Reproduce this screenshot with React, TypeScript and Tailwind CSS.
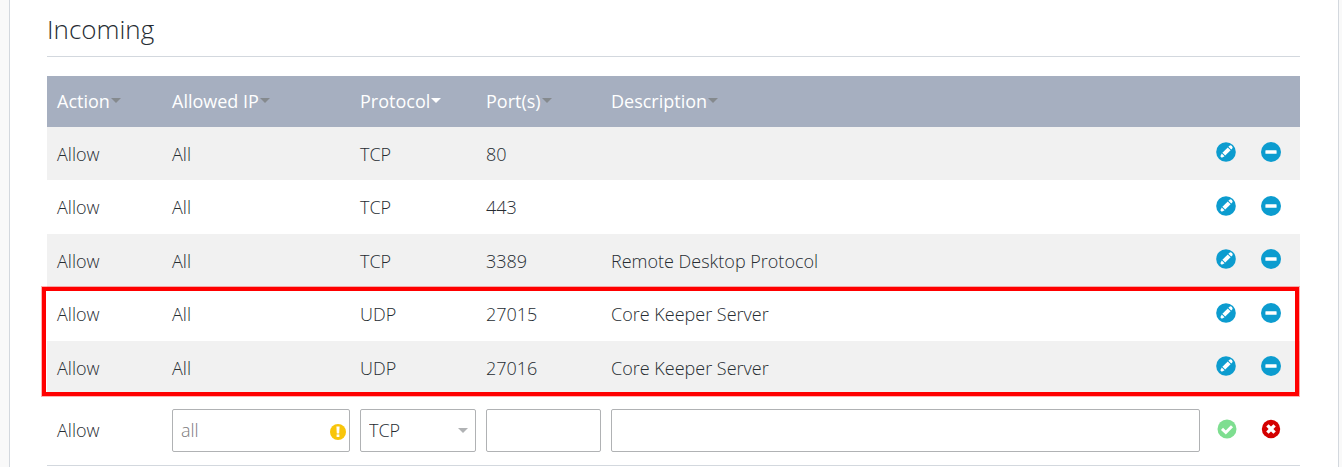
import React, { useState } from 'react';

interface Rule {
  id: number;
  action: string;
  ip: string;
  protocol: string;
  ports: string;
  description: string;
}

const rules: Rule[] = [
  { id: 1, action: 'Allow', ip: 'All', protocol: 'TCP', ports: '80', description: '' },
  { id: 2, action: 'Allow', ip: 'All', protocol: 'TCP', ports: '443', description: '' },
  { id: 3, action: 'Allow', ip: 'All', protocol: 'TCP', ports: '3389', description: 'Remote Desktop Protocol' },
  { id: 4, action: 'Allow', ip: 'All', protocol: 'UDP', ports: '27015', description: 'Core Keeper Server' },
  { id: 5, action: 'Allow', ip: 'All', protocol: 'UDP', ports: '27016', description: 'Core Keeper Server' },
];

const columns = ['Action', 'Allowed IP', 'Protocol', 'Port(s)', 'Description'];

const EditIcon = () => (
  <svg viewBox="0 0 20 20" className="block size-5" aria-hidden="true">
    <circle cx="10" cy="10" r="9.8" fill="#0c9ccf" />
    <g transform="rotate(45 10 10)" fill="#fff">
      <path d="M8 3.4a2 1.8 0 0 1 4 0v1.2H8z" />
      <path d="M8 5.5h4v7.6H8z" />
      <path d="M8 14h4l-1 3H9z" />
    </g>
  </svg>
);

const RemoveIcon = () => (
  <svg viewBox="0 0 20 20" className="block size-5" aria-hidden="true">
    <circle cx="10" cy="10" r="10" fill="#0c9ccf" />
    <rect x="4.4" y="8.2" width="11.2" height="3.6" rx="0.6" fill="#fff" />
  </svg>
);

const ConfirmIcon = () => (
  <svg viewBox="0 0 20 20" className="block size-5" aria-hidden="true">
    <circle cx="10" cy="10" r="9.5" fill="#7ede90" />
    <path d="M5 9.9l3.8 3.6 6.2-6.2" fill="none" stroke="#fff" strokeWidth="3" />
  </svg>
);

const CancelIcon = () => (
  <svg viewBox="0 0 20 20" className="block size-5" aria-hidden="true">
    <circle cx="10" cy="10" r="9.2" fill="#d40000" />
    <path d="M6.4 6.4l7.2 7.2M13.6 6.4l-7.2 7.2" stroke="#fff" strokeWidth="3.4" />
  </svg>
);

const WarningIcon = () => (
  <svg viewBox="0 0 16 16" className="block size-4" aria-hidden="true">
    <circle cx="8" cy="8" r="8" fill="#f8c50a" />
    <path d="M6.4 2.4h3.2l-.4 7H6.8z" fill="#fff" />
    <rect x="6.6" y="10.4" width="2.8" height="2.6" fill="#fff" />
  </svg>
);

const Caret = ({ className }: { className: string }) => (
  <svg viewBox="0 0 10 5" className={`h-[5px] w-[10px] ${className}`} aria-hidden="true">
    <path d="M0 0h10L5 5z" fill="currentColor" />
  </svg>
);

const inputClass =
  'block h-[43px] w-full rounded-xs border border-[#b0b2b4] bg-white px-2 placeholder:text-[#7c7c7c] focus:border-[#0c9ccf] focus:outline-none';

const App: React.FC = () => {
  const [sortBy, setSortBy] = useState('Protocol');
  const [protocol, setProtocol] = useState('TCP');

  return (
    <div className="min-h-screen bg-[#f9f9f9] pr-[3px] pl-[9px] font-['Open_Sans',sans-serif] text-lg font-light text-[#262c32]">
      <main className="min-h-screen border-x border-[#d3d8de] bg-white pt-[10px] pr-[38px] pl-[37px]">
        <h2 className="border-b border-[#d3d8de] pb-2 text-[26px] leading-[38px]">Incoming</h2>

        <div className="relative mt-[19px]">
          <table className="w-full table-fixed border-collapse text-left">
            <colgroup>
              <col className="w-[115px]" />
              <col className="w-[188px]" />
              <col className="w-[126px]" />
              <col className="w-[125px]" />
              <col />
              <col className="w-[100px]" />
            </colgroup>
            <thead>
              <tr className="h-[51px] bg-[#a6afc0] text-white">
                {columns.map((name) => (
                  <th key={name} className="pb-[2px] pl-[10px] font-normal">
                    <button type="button" onClick={() => setSortBy(name)} className="flex items-center gap-px">
                      {name}
                      <Caret className={sortBy === name ? 'text-white' : 'text-[#858a8e]'} />
                    </button>
                  </th>
                ))}
                <td />
              </tr>
            </thead>
            <tbody>
              {rules.map((rule) => (
                <tr key={rule.id} className="h-[54px] odd:h-[53px] odd:bg-[#f1f1f1]">
                  <td className="pl-[10px]">{rule.action}</td>
                  <td className="pl-[10px]">{rule.ip}</td>
                  <td className="pl-[10px]">{rule.protocol}</td>
                  <td className="pl-[10px]">{rule.ports}</td>
                  <td className="pl-[10px]">{rule.description}</td>
                  <td className="pb-[3px] pl-4">
                    <div className="flex gap-[25px]">
                      <button type="button" aria-label="Edit rule">
                        <EditIcon />
                      </button>
                      <button type="button" aria-label="Remove rule">
                        <RemoveIcon />
                      </button>
                    </div>
                  </td>
                </tr>
              ))}

              {/* New rule */}
              <tr className="h-[71px] border-b border-[#d3d8de]">
                <td className="pt-[2px] pl-[10px]">Allow</td>
                <td className="pt-[2px] pl-[10px]">
                  <div className="relative">
                    <input type="text" aria-label="Allowed IP" placeholder="all" className={inputClass} />
                    <span className="absolute top-[15px] right-1">
                      <WarningIcon />
                    </span>
                  </div>
                </td>
                <td className="pt-[2px] pl-[10px]">
                  <div className="relative">
                    <select
                      aria-label="Protocol"
                      value={protocol}
                      onChange={(e) => setProtocol(e.target.value)}
                      className={`${inputClass} appearance-none`}
                    >
                      <option>TCP</option>
                      <option>UDP</option>
                    </select>
                    <Caret className="pointer-events-none absolute top-[19px] right-2 text-[#b0b2b4]" />
                  </div>
                </td>
                <td className="pt-[2px] pl-[10px]">
                  <input type="text" aria-label="Port(s)" className={inputClass} />
                </td>
                <td className="pt-[2px] pl-[10px]">
                  <input type="text" aria-label="Description" className={inputClass} />
                </td>
                <td className="pl-[17px]">
                  <div className="flex gap-6">
                    <button type="button" aria-label="Save rule">
                      <ConfirmIcon />
                    </button>
                    <button type="button" aria-label="Discard rule">
                      <CancelIcon />
                    </button>
                  </div>
                </td>
              </tr>
            </tbody>
          </table>

          {/* Highlight around the game server rules */}
          <div className="pointer-events-none absolute top-[211px] right-px -left-[5px] h-[109px] border-4 border-[#ff0000] ring-1 ring-[#ff0000]/30" />
        </div>
      </main>
    </div>
  );
};

export default App;
